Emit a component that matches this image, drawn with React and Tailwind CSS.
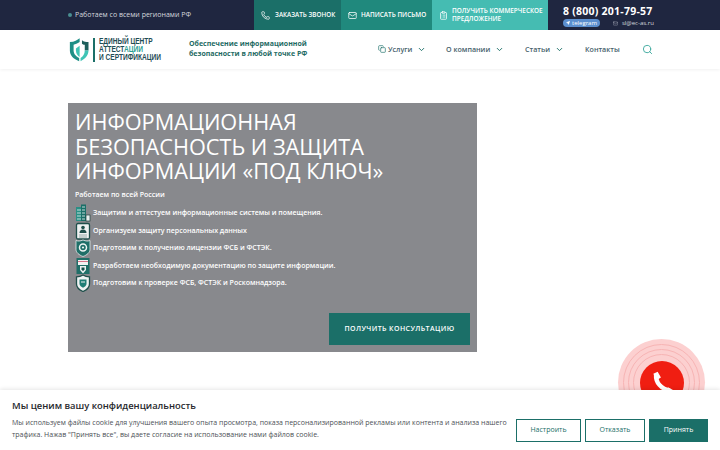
import { Phone, Mail, ClipboardList, Copy, ChevronDown, Search, Send } from 'lucide-react';

const nav = [
  { label: 'Услуги', icon: true, arrow: true, w: 'w-[68px]' },
  { label: 'О компании', arrow: true, w: 'w-[79px]' },
  { label: 'Статьи', arrow: true, w: 'w-[60px]' },
  { label: 'Контакты', w: 'w-[57px]' },
];

const points = [
  'Защитим и аттестуем информационные системы и помещения.',
  'Организуем защиту персональных данных',
  'Подготовим к получению лицензии ФСБ и ФСТЭК.',
  'Разработаем необходимую документацию по защите информации.',
  'Подготовим к проверке ФСБ, ФСТЭК и Роскомнадзора.',
];

function PointIcon({ kind }) {
  if (kind === 0) {
    return (
      <svg viewBox="0 0 16 18" className="w-4 h-[18px]">
        <rect x="1" y="3" width="6" height="14" fill="#2a8f85" />
        <rect x="6" y="0.500" width="5" height="16.500" fill="#1b6f68" />
        <path d="M2 6h4M2 9h4M2 12h4M2 15h4M7 3h3M7 6h3M7 9h3M7 12h3M7 15h3" stroke="#d7e8e5" strokeWidth="0.900" />
        <rect x="11" y="11" width="4" height="6" fill="#e8efee" stroke="#1f3f3d" strokeWidth="0.700" />
      </svg>
    );
  }
  if (kind === 1) {
    return (
      <svg viewBox="0 0 16 18" className="w-4 h-[18px]">
        <rect x="1.500" y="1.500" width="13" height="15.500" rx="1.500" fill="#eef1f1" stroke="#1f4f4b" strokeWidth="1.300" />
        <circle cx="8" cy="5.500" r="1.800" fill="#1f4f4b" />
        <path d="M4.500 11a3.500 3.500 0 0 1 7 0z" fill="#1f4f4b" />
        <path d="M4 13h8M4 15h8" stroke="#8fa5a3" strokeWidth="0.900" />
      </svg>
    );
  }
  if (kind === 2) {
    return (
      <svg viewBox="0 0 16 18" className="w-4 h-[18px]">
        <path d="M1 1.500c2 .8 4 .8 7-.5 3 1.300 5 1.300 7 .5v9c0 3-3 5.500-7 7-4-1.500-7-4-7-7z" fill="#1f6f68" stroke="#e4ecec" strokeWidth="0.800" />
        <circle cx="8" cy="8.500" r="3.500" fill="none" stroke="#eef5f4" strokeWidth="1.500" />
        <circle cx="8" cy="8.500" r="1.100" fill="#eef5f4" />
      </svg>
    );
  }
  if (kind === 3) {
    return (
      <svg viewBox="0 0 16 18" className="w-4 h-[18px]">
        <rect x="1.500" y="1" width="13" height="16" fill="#1f6f68" />
        <rect x="3" y="3" width="10" height="5" fill="#f2f4f4" />
        <path d="M3 4.500h10" stroke="#d9748a" strokeWidth="1" />
        <path d="M5 9h6v4l-3 3.500L5 13z" fill="#eef2f2" />
        <path d="M6.500 10.500h3v2l-1.500 1.800-1.500-1.800z" fill="#14504b" />
      </svg>
    );
  }
  return (
    <svg viewBox="0 0 16 18" className="w-4 h-[18px]">
      <path d="M8 1c2 1.300 4 1.800 6.500 1.800V10c0 3.500-3 6-6.500 7.500C4.500 16 1.500 13.500 1.500 10V2.800C4 2.800 6 2.300 8 1z" fill="#eef2f2" stroke="#1f4f4b" strokeWidth="1.300" />
      <path d="M4.500 5.500h7v4.500c0 1.500-2 3-3.500 3.700-1.500-.7-3.500-2.200-3.500-3.700z" fill="#1f7d75" />
      <path d="M6 8h4" stroke="#eef2f2" strokeWidth="1" />
    </svg>
  );
}

function Logo() {
  return (
    <div className="flex items-center">
      <svg viewBox="0 0 24 26" className="w-[23px] h-[25px]">
        <path d="M2 5 C7 5 10 3 12.500 1 L12.500 5 C10 6.500 8 7.500 6 8 L6 14 C6 18 9 20.500 12 22 L12 25.500 C6 23 2 19.500 2 14z" fill="#1e8f86" />
        <path d="M15 3 C17 4.500 19.500 5 22 5 L22 14 L18 14 L18 8 C16.500 7.800 15.500 7.200 15 6.800z" fill="#1d5f5c" />
        <path d="M8.500 12l4-3v12c-2.500-1.500-4-4-4-7z" fill="#3fc4b5" />
        <path d="M18 14c0 4-2 6.500-4.500 8v3.500c4.500-2.500 8.500-6 8.500-11.500z" fill="#3fc4b5" />
      </svg>
      <div className="w-[2px] h-[24px] bg-[#1b6f68] ml-[3px] mr-[4px]" />
      <div className="font-['Liberation_Sans',sans-serif] font-bold text-[9.500px] leading-[8px] text-[#1f4d55] whitespace-nowrap origin-left scale-x-[0.69] -translate-y-[1px]">
        <div>ЕДИНЫЙ ЦЕНТР</div>
        <div>АТТЕСТ<span className="text-[#2a9d92]">АЦИИ</span></div>
        <div>И СЕРТИФИКАЦИИ</div>
      </div>
    </div>
  );
}

export default function App() {
  return (
    <div className="relative w-[720px] h-[450px] overflow-hidden bg-white font-['Open_Sans',sans-serif]">
      {/* Top bar */}
      <div className="flex h-[30px] bg-[#1f2640] text-white">
        <div className="w-[254px] pl-[68px] flex items-center gap-[3px] text-[7px] text-[#d5d8df]">
          <span className="w-[4px] h-[4px] rounded-full bg-[#4a8f92]" />
          Работаем со всеми регионами РФ
        </div>
        <div className="w-[87px] bg-[#1b6f68] flex items-center pl-[7px] gap-[5px] text-[6.300px] font-semibold whitespace-nowrap">
          <Phone size={9} />
          ЗАКАЗАТЬ ЗВОНОК
        </div>
        <div className="w-[91px] bg-[#20897d] flex items-center pl-[7px] gap-[4px] text-[6.400px] font-semibold whitespace-nowrap">
          <Mail size={9} />
          НАПИСАТЬ ПИСЬМО
        </div>
        <div className="w-[116px] bg-[#45bcb2] flex items-center pl-[7px] gap-[4px] text-[6.400px] leading-[8px] font-semibold">
          <ClipboardList size={9} className="shrink-0" />
          <span className="whitespace-nowrap">ПОЛУЧИТЬ КОММЕРЧЕСКОЕ<br />ПРЕДЛОЖЕНИЕ</span>
        </div>
        <div className="flex-1 pl-[15px] pt-[5px]">
          <div className="text-[10.500px] leading-[13px] font-bold tracking-[0.25px] whitespace-nowrap">8 (800) 201-79-57</div>
          <div className="flex items-center text-[6px] leading-[8px] mt-[1px]">
            <span className="flex items-center gap-[2px] w-[37px] h-[8px] rounded-full bg-[#5b8fd0] pl-[3px]">
              <Send size={4} fill="white" />
              telegram
            </span>
            <Mail size={5} className="ml-[13px] mr-[4px] text-[#aab0bd]" />
            <span className="text-[#d5d8df]">sl@ec-as.ru</span>
          </div>
        </div>
      </div>

      {/* Header */}
      <div className="flex items-center h-[39px] pl-[68px] shadow-[0_1px_3px_rgba(0,0,0,0.06)]">
        <div className="w-[121px]"><Logo /></div>
        <div className="w-[189px] text-[7px] leading-[10px] font-bold text-[#1f6b64] -translate-y-[1px]">
          Обеспечение информационной<br />безопасности в любой точке РФ
        </div>
        <nav className="flex items-center text-[7.100px] font-semibold text-[#46606a]">
          {nav.map((item) => (
            <div key={item.label} className={`flex items-center whitespace-nowrap ${item.w}`}>
              {item.icon && <Copy size={8} className="mr-[2px] text-[#1b6f68]" />}
              {item.label}
              {item.arrow && <ChevronDown size={9} strokeWidth={2.500} className="ml-[5px] text-[#1b6f68]" />}
            </div>
          ))}
          <Search size={11} className="text-[#3aa79c]" />
        </nav>
      </div>

      {/* Hero */}
      <div className="ml-[68px] mt-[34px] w-[409px] h-[249px] bg-[#88898d] pt-[7px] pl-[7px] flex flex-col text-white">
        <h1 className="text-[21.700px] leading-[24.500px] font-normal">
          ИНФОРМАЦИОННАЯ<br />БЕЗОПАСНОСТЬ И ЗАЩИТА<br />ИНФОРМАЦИИ «ПОД КЛЮЧ»
        </h1>
        <p className="text-[7px] font-semibold leading-[10px] mt-[6px]">Работаем по всей России</p>
        <ul className="mt-[5px] flex flex-col">
          {points.map((text, i) => (
            <li key={text} className="h-[17.500px] flex items-center text-[7px] font-semibold whitespace-nowrap">
              <span className="w-[17px] shrink-0"><PointIcon kind={i} /></span>
              <span className="ml-[1px]">{text}</span>
            </li>
          ))}
        </ul>
        <div className="mt-auto mb-[7px] mr-[7px] self-end w-[141px] h-[32px] bg-[#1b6f68] flex items-center justify-center text-[7px] font-semibold tracking-[0.4px]">
          ПОЛУЧИТЬ КОНСУЛЬТАЦИЮ
        </div>
      </div>

      {/* Call widget */}
      <div className="absolute left-[618px] top-[339px] w-[87px] h-[87px] rounded-full bg-[#fcd0d0] flex items-center justify-center">
        <div className="w-[77px] h-[77px] rounded-full border border-[#f7b4b4] flex items-center justify-center">
          <div className="w-[67px] h-[67px] rounded-full border border-[#f7b4b4] flex items-center justify-center">
            <div className="w-[57px] h-[57px] rounded-full border border-[#f7b4b4] flex items-center justify-center">
              <div className="w-[44px] h-[44px] rounded-full bg-[#f01e12] flex items-center justify-center">
                <svg viewBox="0 0 24 24" className="w-[26px] h-[26px]">
                  <path d="M6.500 4.500C6 11 11 18 19.500 19" fill="none" stroke="white" strokeWidth="4" />
                  <path d="M4 3.500 8 1.500l3 5.500-4 2.500zM15 20l2.500-4 5.500 3-2 4z" fill="white" />
                </svg>
              </div>
            </div>
          </div>
        </div>
      </div>

      {/* Cookie banner */}
      <div className="absolute left-0 right-0 bottom-0 h-[60px] bg-white shadow-[0_-1px_4px_rgba(0,0,0,0.1)] flex items-center pl-[12px] pr-[12px]">
        <div className="flex-1">
          <div className="text-[9.400px] leading-[14px] font-semibold text-[#26282c]">Мы ценим вашу конфиденциальность</div>
          <p className="text-[7px] leading-[12px] mt-[4px] w-[500px] text-[#4c5055]">
            Мы используем файлы cookie для улучшения вашего опыта просмотра, показа персонализированной рекламы или контента и анализа нашего трафика. Нажав "Принять все", вы даете согласие на использование нами файлов cookie.
          </p>
        </div>
        <div className="flex items-center gap-[4px] mt-[21px] text-[7px]">
          <div className="w-[65px] h-[23px] border border-[#1b6f68] text-[#1b6f68] flex items-center justify-center">Настроить</div>
          <div className="w-[60px] h-[23px] border border-[#1b6f68] text-[#1b6f68] flex items-center justify-center">Отказать</div>
          <div className="w-[59px] h-[23px] bg-[#1b6f68] text-white flex items-center justify-center">Принять</div>
        </div>
      </div>
    </div>
  );
}
